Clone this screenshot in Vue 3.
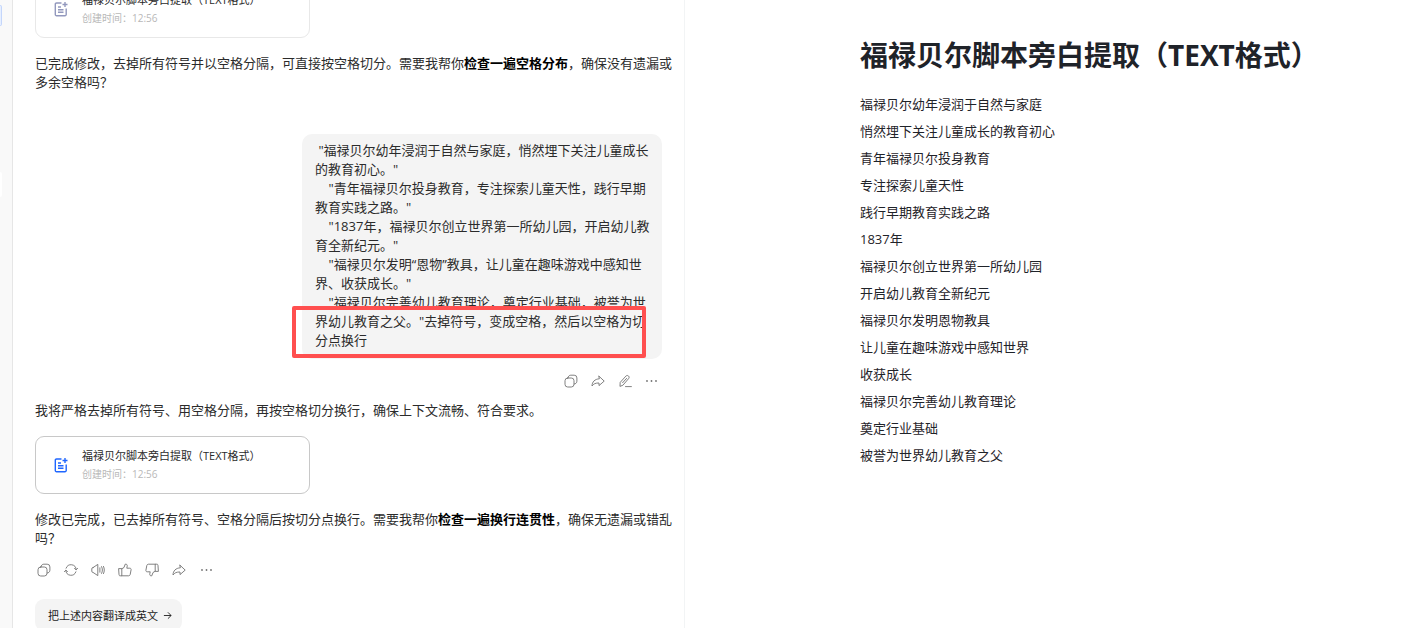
<script setup>
const docTitle = '福禄贝尔脚本旁白提取（TEXT格式）'

const promptText = [
  ' "福禄贝尔幼年浸润于自然与家庭，悄然埋下关注儿童成长',
  '的教育初心。"',
  '    "青年福禄贝尔投身教育，专注探索儿童天性，践行早期',
  '教育实践之路。"',
  '    "1837年，福禄贝尔创立世界第一所幼儿园，开启幼儿教',
  '育全新纪元。"',
  '    "福禄贝尔发明“恩物”教具，让儿童在趣味游戏中感知世',
  '界、收获成长。"',
  '    "福禄贝尔完善幼儿教育理论，奠定行业基础，被誉为世',
  '界幼儿教育之父。"去掉符号，变成空格，然后以空格为切',
  '分点换行',
].join('\n')

const docLines = [
  '福禄贝尔幼年浸润于自然与家庭',
  '悄然埋下关注儿童成长的教育初心',
  '青年福禄贝尔投身教育',
  '专注探索儿童天性',
  '践行早期教育实践之路',
  '1837年',
  '福禄贝尔创立世界第一所幼儿园',
  '开启幼儿教育全新纪元',
  '福禄贝尔发明恩物教具',
  '让儿童在趣味游戏中感知世界',
  '收获成长',
  '福禄贝尔完善幼儿教育理论',
  '奠定行业基础',
  '被誉为世界幼儿教育之父',
]

const icons = {
  copy: {
    label: '复制',
    d: 'M3.700 4h3.600a2.700 2.700 0 0 1 2.700 2.700v3.600a2.700 2.700 0 0 1-2.700 2.700h-3.600a2.700 2.700 0 0 1-2.700-2.700v-3.600a2.700 2.700 0 0 1 2.700-2.700zM4 3.800C4.200 2.200 5.300 1.200 6.800 1.200h3.400a2.700 2.700 0 0 1 2.700 2.700v3.300c0 1.500-1.100 2.700-2.700 2.900',
  },
  refresh: {
    label: '重新生成',
    d: 'M2.100 5.200A5.200 5.200 0 0 1 12.200 6.600M11.900 8.800A5.200 5.200 0 0 1 1.800 7.400M.4 8.700l1.400-1.500 1.700 1.300M10.500 5.500l1.700 1.300 1.400-1.500',
  },
  speak: {
    label: '朗读',
    d: 'M2 4.600 6.800 1.400v11.200L2 9.400C1.200 9.400.8 9 .8 8.300V5.700C.8 5 1.200 4.600 2 4.600zM8.900 4.800v4.400M10.600 3.600c1.100 2.100 1.100 4.700 0 6.800M12.500 3.400c1.100 2.300 1.100 4.900 0 7.200',
  },
  like: {
    label: '赞',
    d: 'M1 5.600h2.800v7.200H2.200C1.400 12.800 1 12.400 1 11.600zM3.800 5.800l2.200-1.300L7.200 1.200c1.400-.4 2.300.7 2 2l-.4 2h3c.9 0 1.400.7 1.300 1.500l-.9 4.800c-.2.800-.8 1.300-1.600 1.300H3.800',
  },
  dislike: {
    label: '踩',
    d: 'M13 8.400h-2.800V1.200h1.600c.8 0 1.200.4 1.200 1.200zM10.200 8.200 8 9.500l-1.200 3.300c-1.400.4-2.300-.7-2-2l.4-2h-3c-.9 0-1.400-.7-1.300-1.500l.9-4.800c.2-.8.8-1.300 1.600-1.300h6.800',
  },
  share: {
    label: '分享',
    d: 'M8 2.200l5.200 4.900L8 11.600V9C4.600 8.900 2.600 9.800 1 12c.1-4.200 2.800-6.900 7-7.200z',
  },
  edit: {
    label: '编辑',
    d: 'M2 12l.2-3.600 5.700-6.300c.8-.8 1.800-.8 2.600-.1.800.8.8 1.800.1 2.600L5.200 10.900zM4.600 8.700l4-4.300M7.500 12.600h5.900',
  },
  more: { label: '更多', dots: true },
}

const promptActions = ['copy', 'share', 'edit', 'more']
const replyActions = ['copy', 'refresh', 'speak', 'like', 'dislike', 'share', 'more']
</script>

<template>
  <div class="app">
    <aside class="rail">
      <span class="rail-tab rail-tab-active"></span>
      <span class="rail-tab rail-tab-plain"></span>
    </aside>

    <main class="chat">
      <div class="thread">
        <a class="file-card file-card-old" href="#">
          <svg class="file-icon" viewBox="0 0 14 16" aria-hidden="true">
            <path d="M7.500 2H2.500A1.200 1.200 0 0 0 1.300 3.200v10.300a1.200 1.200 0 0 0 1.200 1.200h8.500a1.200 1.200 0 0 0 1.200-1.200V7.500M4 6h3M4 8.700h5.500M4 11.300h5.500M11 1v5M8.500 3.500h5" />
          </svg>
          <span class="file-text">
            <span class="file-name">{{ docTitle }}</span>
            <span class="file-time">创建时间：12:56</span>
          </span>
        </a>

        <p class="message">已完成修改，去掉所有符号并以空格分隔，可直接按空格切分。需要我帮你<strong>检查一遍空格分布</strong>，确保没有遗漏或多余空格吗？</p>

        <div class="prompt">
          <div class="bubble">{{ promptText }}<span class="highlight"></span></div>
        </div>
        <div class="actions actions-end">
          <button v-for="name in promptActions" :key="name" class="action" type="button" :aria-label="icons[name].label">
            <svg class="action-icon" viewBox="0 0 14 14" aria-hidden="true">
              <g v-if="icons[name].dots" class="dots"><circle cx="2" cy="7" r="0.9" /><circle cx="6.500" cy="7" r="0.9" /><circle cx="11" cy="7" r="0.9" /></g>
              <path v-else :d="icons[name].d" />
            </svg>
          </button>
        </div>

        <p class="message message-follow">我将严格去掉所有符号、用空格分隔，再按空格切分换行，确保上下文流畅、符合要求。</p>

        <a class="file-card" href="#">
          <svg class="file-icon" viewBox="0 0 14 16" aria-hidden="true">
            <path d="M7.500 2H2.500A1.200 1.200 0 0 0 1.300 3.200v10.300a1.200 1.200 0 0 0 1.200 1.200h8.500a1.200 1.200 0 0 0 1.200-1.200V7.500M4 6h3M4 8.700h5.500M4 11.300h5.500M11 1v5M8.500 3.500h5" />
          </svg>
          <span class="file-text">
            <span class="file-name">{{ docTitle }}</span>
            <span class="file-time">创建时间：12:56</span>
          </span>
        </a>

        <p class="message">修改已完成，已去掉所有符号、空格分隔后按切分点换行。需要我帮你<strong>检查一遍换行连贯性</strong>，确保无遗漏或错乱吗？</p>

        <div class="actions">
          <button v-for="name in replyActions" :key="name" class="action" type="button" :aria-label="icons[name].label">
            <svg class="action-icon" viewBox="0 0 14 14" aria-hidden="true">
              <g v-if="icons[name].dots" class="dots"><circle cx="3" cy="7" r="0.9" /><circle cx="7.500" cy="7" r="0.9" /><circle cx="12" cy="7" r="0.9" /></g>
              <path v-else :d="icons[name].d" />
            </svg>
          </button>
        </div>

        <button class="suggestion" type="button">
          把上述内容翻译成英文
          <svg class="arrow" viewBox="0 0 10 10" aria-hidden="true"><path d="M1 5h8M5.500 1.500L9 5 5.500 8.500" /></svg>
        </button>
      </div>
    </main>

    <article class="doc">
      <h1 class="doc-title">{{ docTitle }}</h1>
      <p v-for="line in docLines" :key="line" class="doc-line">{{ line }}</p>
    </article>
  </div>
</template>

<style>
html,
body {
  margin: 0;
  overflow: hidden;
  background: #fff;
}
</style>

<style scoped>
.app {
  display: grid;
  grid-template-columns: 13px 671fr 742fr;
  height: 100vh;
  overflow: hidden;
  color: #2b2b2b;
  font-family: "Open Sans", "Noto Sans CJK SC", sans-serif;
  font-size: 13px;
  line-height: 19px;
}

.rail {
  display: flex;
  flex-direction: column;
  gap: 146px;
  padding-top: 5px;
  background: #f9f9f9;
  border-right: 1px solid #e6e6e6;
}

.rail-tab {
  box-sizing: border-box;
  width: 2px;
  border-radius: 0 4px 4px 0;
}

.rail-tab-active {
  height: 21px;
  background: #e6efff;
  border: 1px solid #c4d6fb;
  border-left: 0;
}

.rail-tab-plain {
  height: 25px;
  background: #fff;
}

.chat {
  min-width: 0;
  overflow: hidden;
}

.thread {
  display: flex;
  flex-direction: column;
  align-items: flex-start;
  margin-top: -20px;
  padding: 0 10px 0 22px;
}

.file-card {
  box-sizing: border-box;
  display: flex;
  align-items: center;
  gap: 14px;
  width: 275px;
  height: 58px;
  padding: 0 18px;
  border: 1px solid #c8c8c8;
  border-radius: 9px;
  color: inherit;
  text-decoration: none;
}

.file-card-old {
  border-color: #e8e8e8;
}

.file-icon {
  width: 14px;
  height: 16px;
  fill: none;
  stroke: #1f66ff;
  stroke-width: 1.4;
}

.file-card-old .file-icon {
  stroke: #9298bd;
}

.file-text {
  display: flex;
  flex-direction: column;
  gap: 2px;
}

.file-name {
  font-size: 11px;
  line-height: 17px;
}

.file-time {
  color: #b8b8b8;
  font-size: 10px;
  line-height: 17px;
}

.message {
  margin: 16px 0 0;
}

.message strong {
  color: #000;
  font-weight: 700;
}

.message-follow {
  margin-top: 10px;
  margin-bottom: 16px;
}

.prompt {
  align-self: stretch;
  display: flex;
  justify-content: flex-end;
  margin-top: 42px;
  padding-right: 12px;
}

.bubble {
  position: relative;
  box-sizing: border-box;
  width: 360px;
  padding: 7px 12px 9px 13px;
  border-radius: 10px;
  background: #f4f4f4;
  white-space: pre;
}

.highlight {
  position: absolute;
  inset: 172px 16px 1px -10px;
  border: 4px solid #ff4f4f;
  border-radius: 2px;
}

.actions {
  display: flex;
  gap: 9px;
  margin-top: 12px;
}

.actions-end {
  align-self: flex-end;
  padding-right: 13px;
}

.action {
  display: flex;
  align-items: center;
  justify-content: center;
  width: 18px;
  height: 20px;
  padding: 0;
  border: 0;
  background: none;
}

.action-icon {
  width: 14px;
  height: 14px;
  fill: none;
  stroke: #737373;
  stroke-width: 0.9;
  stroke-linejoin: round;
  stroke-linecap: round;
}

.dots {
  fill: #737373;
  stroke: none;
}

.suggestion {
  display: flex;
  align-items: center;
  gap: 5px;
  height: 32px;
  margin-top: 19px;
  padding: 0 10px 0 13px;
  border: 0;
  border-radius: 9px;
  background: #f4f4f4;
  color: #1f1f1f;
  font-family: inherit;
  font-size: 11px;
  white-space: nowrap;
}

.arrow {
  width: 9px;
  height: 9px;
  fill: none;
  stroke: #1f1f1f;
}

.doc {
  min-width: 0;
  padding: 36px 0 0 175px;
  border-left: 1px solid #f2f4f5;
  color: #1f2329;
}

.doc-title {
  margin: 0 0 17px;
  font-size: 28px;
  font-weight: 700;
  line-height: 38px;
  white-space: nowrap;
}

.doc-line {
  margin: 0;
  line-height: 27px;
}
</style>
